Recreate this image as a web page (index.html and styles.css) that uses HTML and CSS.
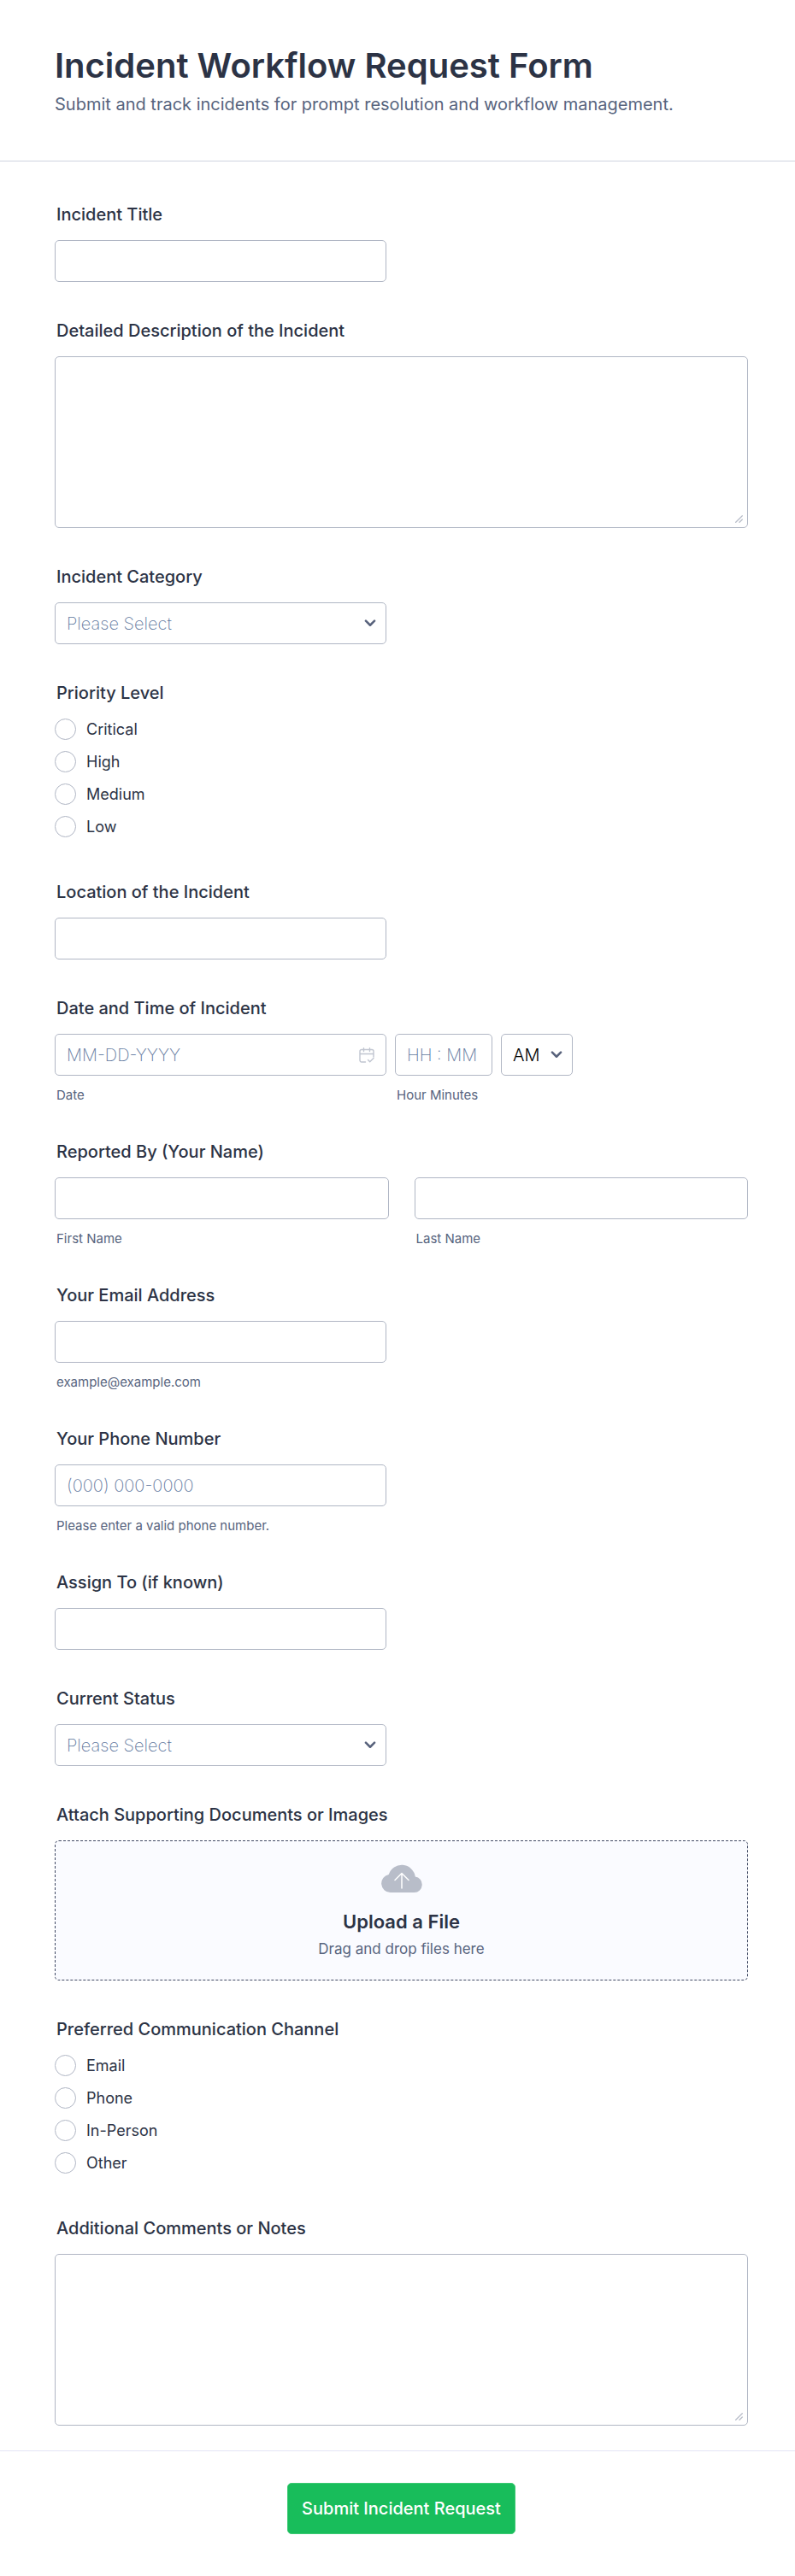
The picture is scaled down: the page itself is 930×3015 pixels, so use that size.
FILE: index.html
```html
<!DOCTYPE html>
<html lang="en">
<head>
<meta charset="utf-8">
<meta name="viewport" content="width=device-width, initial-scale=1">
<title>Incident Workflow Request Form</title>
<link rel="stylesheet" href="styles.css">
</head>
<body>
<svg class="sprite" aria-hidden="true">
  <symbol id="chevron" viewBox="0 0 12 8"><path d="M1.5 1.5 6 6l4.500-4.500" fill="none" stroke="currentColor" stroke-width="2.200" stroke-linecap="round" stroke-linejoin="round"/></symbol>
  <symbol id="grip" viewBox="0 0 9 9"><path d="M.700 8.300 8.300.700M5 8.300 8.300 5" fill="none" stroke="currentColor" stroke-width="1.300" stroke-linecap="round"/></symbol>
</svg>
<header class="header">
  <h1 class="title">Incident Workflow Request Form</h1>
  <p class="subtitle">Submit and track incidents for prompt resolution and workflow management.</p>
</header>
<form class="form">
  <div class="fields">
    <div class="field">
      <label class="label" for="title">Incident Title</label>
      <input class="control half" id="title" type="text">
    </div>
    <div class="field">
      <label class="label" for="description">Detailed Description of the Incident</label>
      <div class="picker">
        <textarea class="control area" id="description"></textarea>
        <svg class="grip" aria-hidden="true"><use href="#grip"/></svg>
      </div>
    </div>
    <div class="field">
      <label class="label" for="category">Incident Category</label>
      <div class="picker half">
        <select class="control empty" id="category"><option>Please Select</option></select>
        <svg class="chevron" aria-hidden="true"><use href="#chevron"/></svg>
      </div>
    </div>
    <div class="field" role="radiogroup" aria-labelledby="priority">
      <span class="label" id="priority">Priority Level</span>
      <div class="choices">
        <label class="choice"><input class="radio" type="radio" name="priority">Critical</label>
        <label class="choice"><input class="radio" type="radio" name="priority">High</label>
        <label class="choice"><input class="radio" type="radio" name="priority">Medium</label>
        <label class="choice"><input class="radio" type="radio" name="priority">Low</label>
      </div>
    </div>
    <div class="field">
      <label class="label" for="location">Location of the Incident</label>
      <input class="control half" id="location" type="text">
    </div>
    <div class="field">
      <label class="label" for="date">Date and Time of Incident</label>
      <div class="when">
        <div class="part half">
          <div class="picker">
            <input class="control" id="date" type="text" placeholder="MM-DD-YYYY">
            <svg class="calendar" viewBox="0 0 18 18" fill="none" stroke="currentColor" stroke-width="1.400" stroke-linecap="round" stroke-linejoin="round" aria-hidden="true"><path d="M7.500 17H3a2 2 0 0 1-2-2V4.500a2 2 0 0 1 2-2h12a2 2 0 0 1 2 2V11M1 7.500h16M5.500.800v3.700M12.500.800v3.700M10.500 14.500l2.200 2.200 4.300-4.200"/></svg>
          </div>
          <label class="sub" for="date">Date</label>
        </div>
        <div class="part time">
          <input class="control" id="time" type="text" placeholder="HH : MM">
          <label class="sub" for="time">Hour Minutes</label>
        </div>
        <div class="picker period">
          <select class="control" aria-label="AM or PM"><option>AM</option><option>PM</option></select>
          <svg class="chevron" aria-hidden="true"><use href="#chevron"/></svg>
        </div>
      </div>
    </div>
    <div class="field" role="group" aria-labelledby="reporter">
      <span class="label" id="reporter">Reported By (Your Name)</span>
      <div class="names">
        <div class="part">
          <input class="control" id="first" type="text">
          <label class="sub" for="first">First Name</label>
        </div>
        <div class="part">
          <input class="control" id="last" type="text">
          <label class="sub" for="last">Last Name</label>
        </div>
      </div>
    </div>
    <div class="field">
      <label class="label" for="email">Your Email Address</label>
      <div class="part half">
        <input class="control" id="email" type="email">
        <label class="sub" for="email">example@example.com</label>
      </div>
    </div>
    <div class="field">
      <label class="label" for="phone">Your Phone Number</label>
      <div class="part half">
        <input class="control" id="phone" type="tel" placeholder="(000) 000-0000">
        <label class="sub" for="phone">Please enter a valid phone number.</label>
      </div>
    </div>
    <div class="field">
      <label class="label" for="assign">Assign To (if known)</label>
      <input class="control half" id="assign" type="text">
    </div>
    <div class="field">
      <label class="label" for="status">Current Status</label>
      <div class="picker half">
        <select class="control empty" id="status"><option>Please Select</option></select>
        <svg class="chevron" aria-hidden="true"><use href="#chevron"/></svg>
      </div>
    </div>
    <div class="field">
      <label class="label" for="files">Attach Supporting Documents or Images</label>
      <label class="dropzone">
        <input class="file" id="files" type="file" multiple>
        <svg class="cloud" viewBox="0 0 48 33" aria-hidden="true">
          <path fill="#b8bdc9" d="M10.600 33A10.600 10.600 0 0 1 8.700 12 A16 16 0 0 1 39.800 14.500 A9.300 9.300 0 0 1 38.700 33Z"/>
          <path d="M24 28V11M16 18.500l8-8 8 8" fill="none" stroke="#fff" stroke-width="1.500" stroke-linecap="round" stroke-linejoin="round"/>
        </svg>
        <span class="upload">Upload a File</span>
        <span class="drag">Drag and drop files here</span>
      </label>
    </div>
    <div class="field" role="radiogroup" aria-labelledby="channel">
      <span class="label" id="channel">Preferred Communication Channel</span>
      <div class="choices">
        <label class="choice"><input class="radio" type="radio" name="channel">Email</label>
        <label class="choice"><input class="radio" type="radio" name="channel">Phone</label>
        <label class="choice"><input class="radio" type="radio" name="channel">In-Person</label>
        <label class="choice"><input class="radio" type="radio" name="channel">Other</label>
      </div>
    </div>
    <div class="field">
      <label class="label" for="notes">Additional Comments or Notes</label>
      <div class="picker">
        <textarea class="control area" id="notes"></textarea>
        <svg class="grip" aria-hidden="true"><use href="#grip"/></svg>
      </div>
    </div>
  </div>
  <div class="footer">
    <button class="submit" type="submit">Submit Incident Request</button>
  </div>
</form>
</body>
</html>
```
FILE: styles.css
```css
* {
  box-sizing: border-box;
}

body {
  margin: 0;
  background: #fff;
  color: #2c3345;
  font-family: Inter, "Liberation Sans", sans-serif;
  font-size: 20px;
  line-height: 24px;
}

.sprite {
  display: none;
}

.header {
  padding: 53px 55px 54px 64px;
  border-bottom: 1px solid #cfd4df;
}

.title {
  margin: 0 0 9px;
  font-size: 40px;
  font-weight: 600;
  line-height: 48px;
}

.subtitle {
  margin: 0;
  color: #57647e;
}

.fields {
  display: flex;
  flex-direction: column;
  gap: 45px;
  padding: 50px 55px 29px 64px;
}

.field {
  display: flex;
  flex-direction: column;
  gap: 18px;
}

.label {
  padding-left: 2px;
  font-weight: 500;
}

.control {
  display: block;
  width: 100%;
  height: 49px;
  margin: 0;
  padding: 0 13px;
  border: 1px solid #b0b6c4;
  border-radius: 5px;
  background: #fff;
  color: #000;
  font: inherit;
  font-weight: 300;
  appearance: none;
}

.control::placeholder,
.empty {
  color: #5f789e;
  font-weight: 200;
  opacity: 1;
}

.half {
  width: 388px;
  max-width: 100%;
}

.area {
  height: 201px;
  resize: vertical;
}

.area::-webkit-resizer {
  background: transparent;
}

.picker {
  position: relative;
}

.grip {
  position: absolute;
  right: 6px;
  bottom: 6px;
  width: 9px;
  height: 9px;
  color: #b8bdc9;
  pointer-events: none;
}

.chevron {
  position: absolute;
  top: 20px;
  right: 12px;
  width: 14px;
  height: 9px;
  color: #57617b;
  pointer-events: none;
}

.calendar {
  position: absolute;
  top: 16px;
  right: 14px;
  width: 18px;
  height: 18px;
  color: #c0c5d0;
}

.choices {
  display: flex;
  flex-direction: column;
  gap: 13px;
  padding-bottom: 7px;
}

.choice {
  display: flex;
  align-items: center;
  align-self: flex-start;
  gap: 12px;
  font-size: 18px;
}

.radio {
  width: 25px;
  height: 25px;
  margin: 0;
  border: 1px solid #b0b6c4;
  border-radius: 50%;
  background: #fff;
  appearance: none;
}

.radio:checked {
  border: 7px solid #18bd5b;
}

.when {
  display: flex;
  align-items: flex-start;
  gap: 10px;
}

.names {
  display: grid;
  grid-template-columns: 1fr 1fr;
  gap: 30px;
}

.part {
  display: flex;
  flex-direction: column;
  gap: 14px;
}

.time {
  width: 114px;
}

.period {
  width: 84px;
}

.sub {
  padding-left: 2px;
  color: #57647e;
  font-size: 15px;
  line-height: 18px;
}

.dropzone {
  display: flex;
  position: relative;
  flex-direction: column;
  align-items: center;
  padding: 27px 20px 25px;
  border: 1px dashed #3f4862;
  border-radius: 5px;
  background: #fafbff;
}

.file {
  position: absolute;
  width: 1px;
  height: 1px;
  opacity: 0;
}

.cloud {
  width: 48px;
  height: 33px;
  margin-bottom: 21px;
}

.upload {
  margin-bottom: 7px;
  font-size: 22px;
  font-weight: 600;
  line-height: 27px;
}

.drag {
  color: #57647e;
  font-size: 17px;
  line-height: 22px;
}

.footer {
  display: flex;
  justify-content: center;
  padding: 37px 55px 49px 64px;
  border-top: 1px solid #e3e5f5;
}

.submit {
  height: 60px;
  padding: 0 16px;
  border: 1px solid #3cc973;
  border-radius: 5px;
  background: #18bd5b;
  color: #fff;
  font: inherit;
  font-weight: 500;
}
```
